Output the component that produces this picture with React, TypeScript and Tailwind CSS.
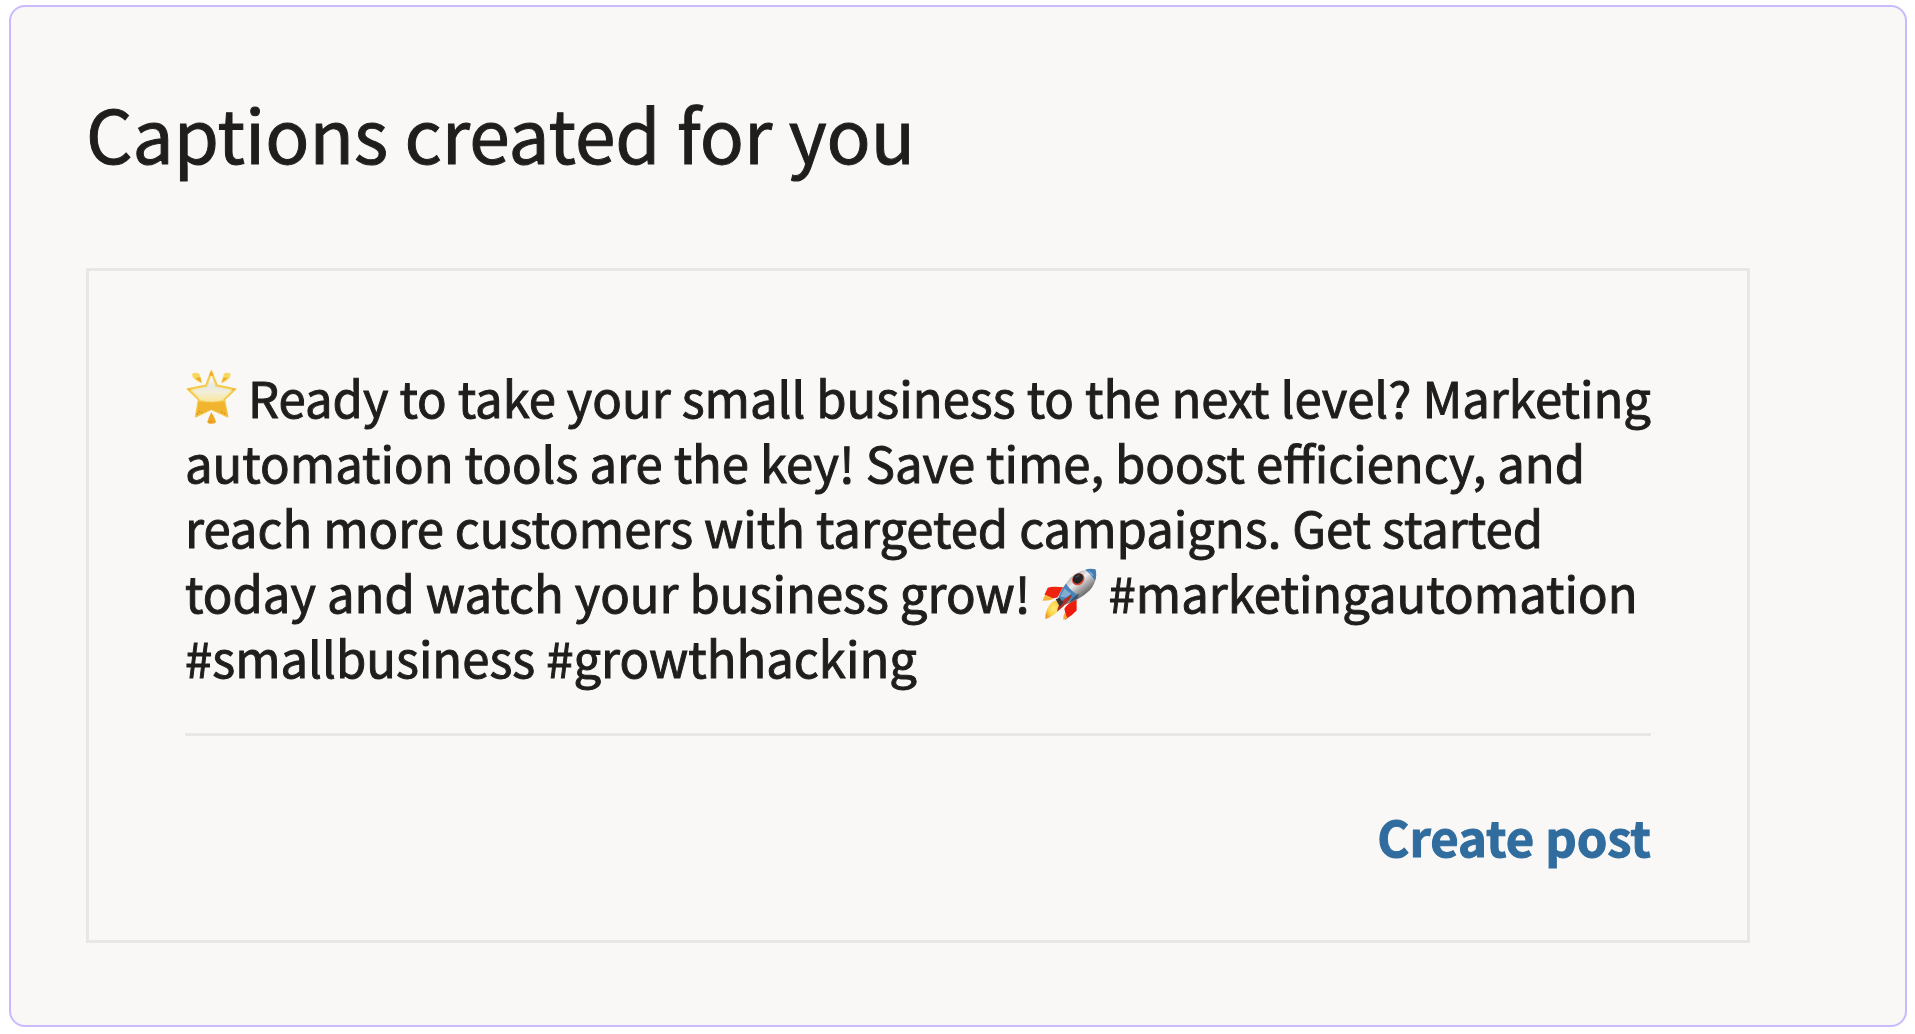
function GlowingStar() {
  return (
    <svg
      viewBox="45 55 156 168"
      className="inline-block h-[56px] w-[52px] align-[-7px]"
      role="img"
      aria-label="Glowing star"
    >
      <defs>
        <linearGradient id="starBody" x1="0" y1="0" x2="0" y2="1">
          <stop offset="0" stopColor="#fbe27a" />
          <stop offset="0.38" stopColor="#f6dc72" />
          <stop offset="0.62" stopColor="#f8e38a" />
          <stop offset="0.7" stopColor="#f2ba35" />
          <stop offset="1" stopColor="#eeaa28" />
        </linearGradient>
        <linearGradient id="starShine" x1="0" y1="0" x2="0" y2="1">
          <stop offset="0" stopColor="#ffffff" />
          <stop offset="0.4" stopColor="#e6e8ea" />
          <stop offset="0.65" stopColor="#f3eed6" />
          <stop offset="1" stopColor="#f8e69a" />
        </linearGradient>
      </defs>
      <path
        d="M124 61 L141 104 L197 115 L163 147 L173 198 L124 176 L77 198 L86 147 L52 115 L108 104 Z"
        fill="url(#starBody)"
        stroke="#f3c84d"
        strokeWidth="5"
        strokeLinejoin="round"
      />
      <path d="M87 152 Q124 162 162 152 L172 196 L124 176 L78 196 Z" fill="#f1b42f" />
      <path
        d="M124 73 L136 108 Q160 111 184 119 Q168 136 158 148 Q124 158 91 148 Q80 132 66 119 Q90 111 113 108 Z"
        fill="url(#starShine)"
      />
      <path
        d="M66 69 Q78 63 88 69 L97 96 Q84 97 68 80 Z M182 69 Q170 63 162 69 L153 97 Q166 97 180 80 Z"
        fill="#f9d860"
      />
      <path d="M76 82 L91 80 L94 96 Z M174 81 L161 81 L155 96 Z" fill="#eda923" />
      <path d="M124 185 Q134 199 138 213 Q136 219 124 219 Q112 219 112 213 Q116 199 124 185 Z" fill="#f0a929" />
      <path d="M118 70 L124 61 L130 70 L128 76 L120 76 Z M52 115 L61 114 L64 121 Z M197 115 L187 114 L184 121 Z" fill="#efb02f" />
      <g fill="#df7b28">
        <circle cx="82" cy="189" r="2" />
        <circle cx="88" cy="183" r="2" />
        <circle cx="95" cy="185" r="2" />
        <circle cx="163" cy="189" r="2" />
        <circle cx="155" cy="184" r="2" />
        <circle cx="124" cy="212" r="2" />
        <circle cx="119" cy="214" r="2" />
      </g>
    </svg>
  );
}

function Rocket() {
  return (
    <svg
      viewBox="75 50 168 160"
      className="inline-block h-[53px] w-[56px] align-[-7px]"
      role="img"
      aria-label="Rocket"
    >
      <defs>
        <linearGradient id="hull" x1="0.3" y1="0.2" x2="0.75" y2="0.75">
          <stop offset="0" stopColor="#a9abad" />
          <stop offset="0.35" stopColor="#eeeeee" />
          <stop offset="0.65" stopColor="#a2a2a2" />
          <stop offset="1" stopColor="#535353" />
        </linearGradient>
        <radialGradient id="flame" cx="0.55" cy="0.45" r="0.6">
          <stop offset="0" stopColor="#ffeb78" />
          <stop offset="0.6" stopColor="#fbd34a" />
          <stop offset="1" stopColor="#ee9a2c" />
        </radialGradient>
      </defs>
      <path d="M92 113 Q103 107 140 111 L121 142 L100 146 L82 134 Z" fill="#ee2410" />
      <path d="M76 152 Q79 141 85 134 L111 146 Q94 153 76 152 Z" fill="#f6b43a" />
      <path d="M179 147 L179 181 Q166 196 144 209 L145 190 L142 176 Q151 158 179 147 Z" fill="#ed1c0e" />
      <path d="M144 187 L151 204 L139 209 Q137 197 144 187 Z" fill="#f6a83a" />
      <path d="M118 150 Q127 160 132 171 Q122 192 85 208 Q82 189 97 165 Q105 153 118 150 Z" fill="url(#flame)" />
      <path
        d="M121 151 Q127 121 161 82 Q190 54 235 57 Q244 92 218 121 Q187 151 133 168 Z"
        fill="url(#hull)"
      />
      <path d="M205 58 Q220 53 236 57 Q241 75 235 91 Q222 70 205 58 Z" fill="#427db4" />
      <path d="M211 60 Q225 65 231 77 L224 74 Q218 65 211 60 Z" fill="#8db7d8" />
      <path d="M147 100 Q159 120 180 133 Q154 158 130 163 L121 151 Q128 126 147 100 Z" fill="#4686bb" />
      <path d="M143 115 Q155 127 163 130 L147 142 L129 139 Z" fill="#82add0" />
      <ellipse cx="184" cy="87" rx="20" ry="17" fill="#e34a35" transform="rotate(-42 184 87)" />
      <ellipse cx="183" cy="85" rx="17" ry="14" fill="#252424" transform="rotate(-42 183 85)" />
      <path d="M174 82 Q180 72 190 74 Q184 84 174 82 Z" fill="#494747" />
      <path d="M166 132 Q160 153 120 185 Q123 159 145 145 Z" fill="#b22d22" />
      <path d="M187 130 L181 145 L157 158 Q163 143 187 130 Z" fill="#34546f" />
      <path d="M116 147 L127 143 L139 157 L128 170 Z" fill="#343436" />
    </svg>
  );
}

export default function App() {
  return (
    <div className="min-h-screen bg-white pt-[5px] pr-[8px] pb-[6px] pl-[9px] font-['Noto_Sans_CJK_SC','Noto_Sans',sans-serif] text-[#1f1e1d]">
      <main className="rounded-2xl border-2 border-[#c9b9fd] bg-[#f9f8f6] pt-[73px] pr-[155px] pb-[82px] pl-[75px]">
        <h1 className="text-[73px] leading-[104px] [-webkit-text-stroke:1px]">
          Captions created for you
        </h1>

        {/* Caption card */}
        <section className="mt-[84px] border-[3px] border-[#e8e7e7] px-24 pt-[93px] pb-[68px]">
          <p className="-mr-4 text-[49px] leading-[65px] [-webkit-text-stroke:1px]">
            <GlowingStar /> Ready to take your small business to the next level? Marketing
            automation tools are the key! Save time, boost efficiency, and reach more customers
            with targeted campaigns. Get started today and watch your business grow! <Rocket />{" "}
            #marketingautomation #smallbusiness #growthhacking
          </p>

          <div className="mt-[44px] flex justify-end border-t-[3px] border-[#e8e7e7] pt-16">
            <button
              type="button"
              className="text-[49px] leading-[72px] font-bold text-[#306c9e] [-webkit-text-stroke:1px]"
            >
              Create post
            </button>
          </div>
        </section>
      </main>
    </div>
  );
}
